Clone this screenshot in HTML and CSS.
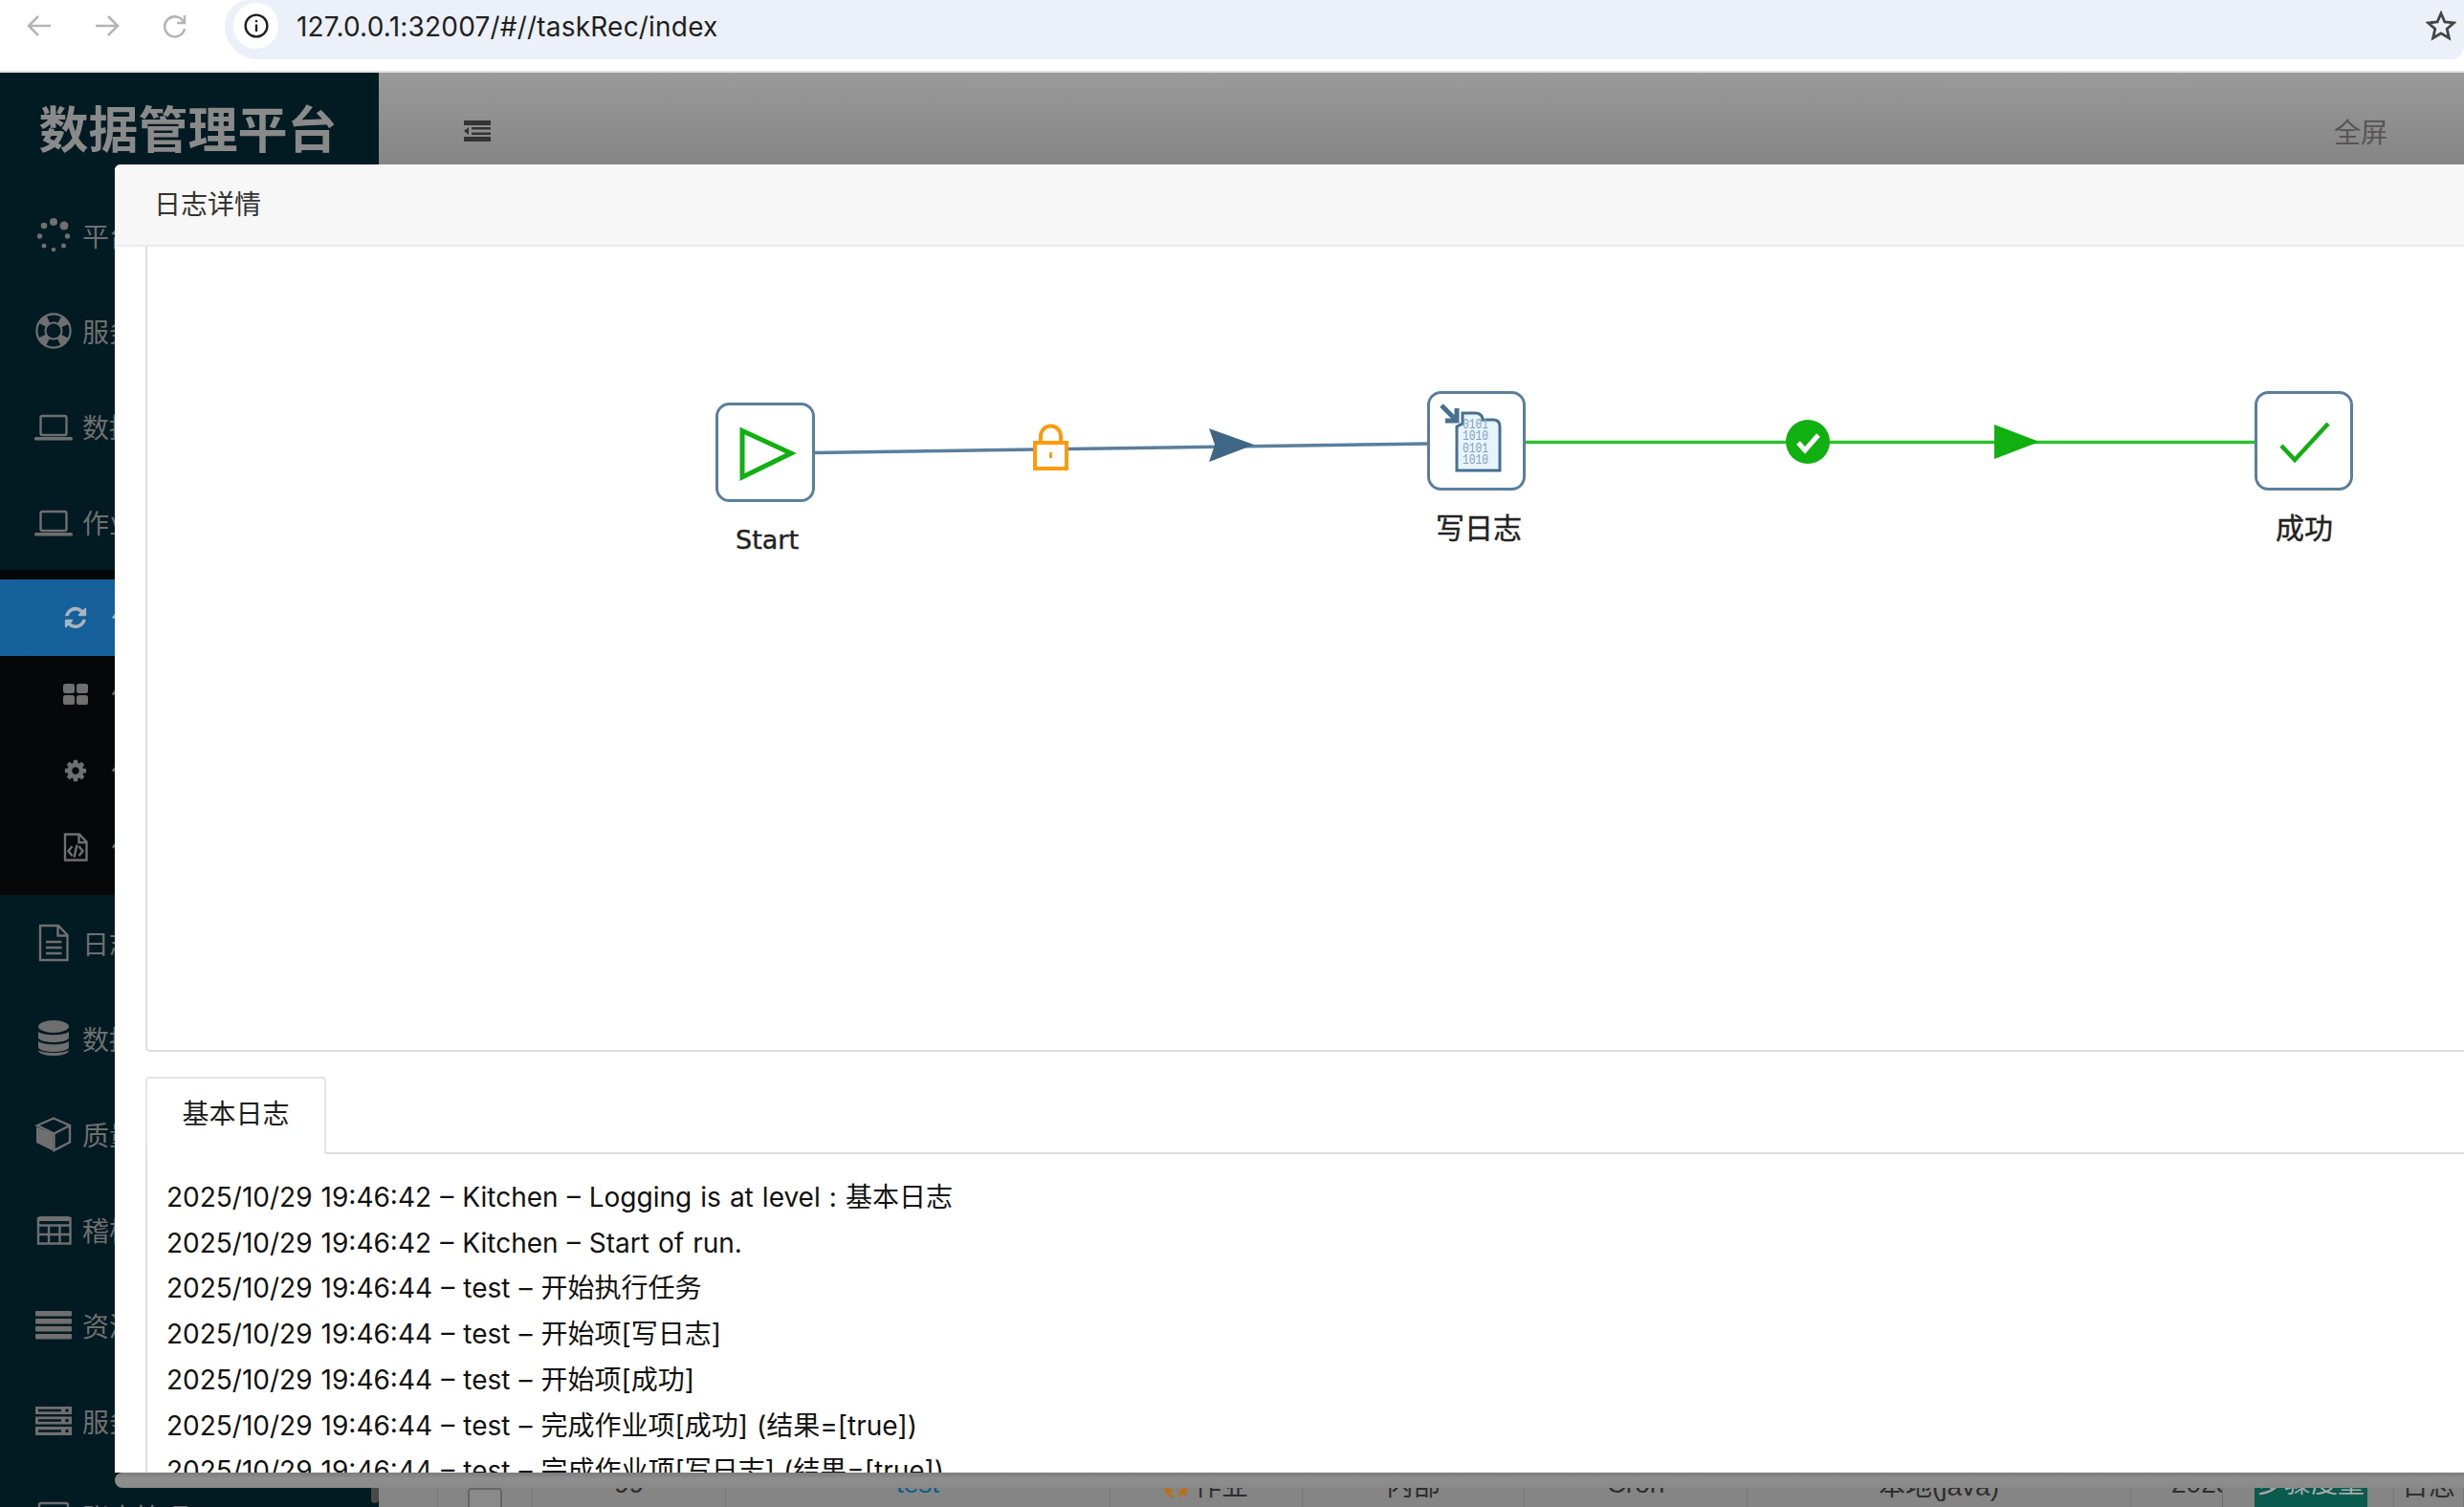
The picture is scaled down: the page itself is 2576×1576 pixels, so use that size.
FILE: index.html
```html
<!DOCTYPE html>
<html lang="zh">
<head>
    <meta charset="UTF-8">
    <title>数据管理平台</title>
    <link rel="stylesheet" href="styles.css">
</head>
<body>
    <div class="browser-bar">
        <svg class="nav-icon" viewBox="0 0 28 28"><path d="M26 14H3M13 4L3 14l10 10"/></svg>
        <svg class="nav-icon" viewBox="0 0 28 28"><path d="M2 14h23M15 4l10 10-10 10"/></svg>
        <svg class="nav-icon" viewBox="0 0 28 28"><path d="M23 10a10.500 10.500 0 1 0 1 7M24 3v8h-8"/></svg>
        <div class="url-bar">
            <div class="site-info">
                <svg viewBox="0 0 24 24"><circle cx="12" cy="12" r="10.500"/><path d="M12 10.500v7M12 6.500v2"/></svg>
            </div>
            <span class="url-text">127.0.0.1:32007/#//taskRec/index</span>
            <svg class="star" viewBox="0 0 32 32"><path d="M16 3l3.900 9 9.600.900-7.300 6.400 2.200 9.500L16 23.800l-8.400 5 2.200-9.500-7.300-6.400 9.600-.900z"/></svg>
        </div>
    </div>

    <div class="app">
        <aside class="sidebar">
            <div class="logo">数据管理平台</div>
            <ul class="menu">
                <li class="menu-item">
                    <svg class="menu-icon" viewBox="0 0 40 40"><circle cx="31" cy="10" r="4.500"/><circle cx="20" cy="6" r="4"/><circle cx="10" cy="10" r="3.300"/><circle cx="5.500" cy="21" r="2.700"/><circle cx="10" cy="31" r="2.500"/><circle cx="20" cy="35" r="2.300"/><circle cx="30.500" cy="31" r="2.500"/><circle cx="34.500" cy="21" r="2.700"/></svg>
                    <span>平台概览</span>
                </li>
                <li class="menu-item">
                    <svg class="menu-icon" viewBox="0 0 40 40"><circle cx="20" cy="20" r="18.700"/><circle class="cut" cx="20" cy="20" r="13" stroke-width="7" stroke-dasharray="12 8.420" stroke-dashoffset="6"/><circle class="hole" cx="20" cy="20" r="7.500"/></svg>
                    <span>服务管理</span>
                </li>
                <li class="menu-item">
                    <svg class="menu-icon" viewBox="0 0 40 40"><rect class="line" x="6.500" y="9" width="27" height="20" rx="2"/><rect y="31" width="40" height="3.500" rx="1.500"/></svg>
                    <span>数据管理</span>
                </li>
                <li class="menu-item">
                    <svg class="menu-icon" viewBox="0 0 40 40"><rect class="line" x="6.500" y="9" width="27" height="20" rx="2"/><rect y="31" width="40" height="3.500" rx="1.500"/></svg>
                    <span>作业管理</span>
                </li>
                <li class="submenu">
                    <ul>
                        <li class="sub-item active">
                            <svg class="sub-icon" viewBox="0 0 1792 1792"><path d="M1639 1056q0 5-1 7-64 268-268 434.500t-478 166.500q-146 0-282.500-55t-243.500-157l-129 129q-19 19-45 19t-45-19-19-45v-448q0-26 19-45t45-19h448q26 0 45 19t19 45-19 45l-137 137q71 66 161 102t187 36q134 0 250-65t186-179q11-17 53-117 8-23 30-23h192q13 0 22.500 9.500t9.500 22.500zm25-800v448q0 26-19 45t-45 19h-448q-26 0-45-19t-19-45 19-45l138-138q-148-137-349-137-134 0-250 65t-186 179q-11 17-53 117-8 23-30 23h-199q-13 0-22.500-9.500t-9.500-22.500v-7q65-268 270-434.500t480-166.500q146 0 284 55.500t245 156.500l130-129q19-19 45-19t45 19 19 45z"/></svg>
                            <span>作业记录</span>
                        </li>
                        <li class="sub-item">
                            <svg class="sub-icon" viewBox="0 0 26 26"><rect y="2" width="12" height="10" rx="2.500"/><rect x="14" y="2" width="12" height="10" rx="2.500"/><rect y="14" width="12" height="10" rx="2.500"/><rect x="14" y="14" width="12" height="10" rx="2.500"/></svg>
                            <span>作业分组</span>
                        </li>
                        <li class="sub-item">
                            <svg class="sub-icon" viewBox="0 0 1792 1792"><path d="M1152 896q0-106-75-181t-181-75-181 75-75 181 75 181 181 75 181-75 75-181zm512-109v222q0 12-8 23t-20 13l-185 28q-19 54-39 91 35 50 107 138 10 12 10 25t-9 23q-27 37-99 108t-94 71q-12 0-26-9l-138-108q-44 23-91 38-16 136-29 186-7 28-36 28h-222q-14 0-24.500-8.500t-11.500-21.500l-28-184q-49-16-90-37l-141 107q-10 9-25 9-14 0-25-11-126-114-165-168-7-10-7-23 0-12 8-23 15-21 51-66.500t54-70.500q-27-50-41-99l-183-27q-13-2-21-12.500t-8-23.500v-222q0-12 8-23t19-13l186-28q14-46 39-92-40-57-107-138-10-12-10-24 0-10 9-23 26-36 98.500-107.500t94.500-71.500q13 0 26 10l138 107q44-23 91-38 16-136 29-186 7-28 36-28h222q14 0 24.500 8.500t11.500 21.500l28 184q49 16 90 37l142-107q9-9 24-9 13 0 25 10 129 119 165 170 7 8 7 22 0 12-8 23-15 21-51 66.500t-54 70.500q26 50 41 98l183 28q13 2 21 12.500t8 23.500z"/></svg>
                            <span>作业配置</span>
                        </li>
                        <li class="sub-item">
                            <svg class="sub-icon sub-icon-tall" viewBox="0 0 26 30"><path class="line" d="M2 1.500h15l7.500 8V28.500H2zM16.500 1.500v8.500h8M9.500 14l-4 5 4 5M16.500 14l4 5-4 5M14.500 12.500l-3 13"/></svg>
                            <span>作业脚本</span>
                        </li>
                    </ul>
                </li>
                <li class="menu-item">
                    <svg class="menu-icon" viewBox="0 0 40 40"><path class="line" d="M6 2h19l9.500 10v26H6zM24.500 2v10.500h10M12 19h16.500M12 25h16.500M12 31h16.500"/></svg>
                    <span>日志管理</span>
                </li>
                <li class="menu-item">
                    <svg class="menu-icon" viewBox="0 0 40 40"><ellipse cx="20" cy="7.500" rx="16" ry="6.500"/><path d="M4 12.500c3 5 29 5 32 0v7c-3 6-29 6-32 0zM4 22.500c3 5 29 5 32 0v7c-3 6-29 6-32 0zM4 32c3 4 29 4 32 0c0 8-32 8-32 0z"/></svg>
                    <span>数据源</span>
                </li>
                <li class="menu-item">
                    <svg class="menu-icon" viewBox="0 0 40 40"><path d="M19.500 19.500L2 12.500v16.500l17.500 8.500z"/><path class="line" d="M3 11l17-7.500L37 11v17.500L20.500 37V19.500zM3 11l17.500 8.500M37 11l-16.500 8.500"/></svg>
                    <span>质量管理</span>
                </li>
                <li class="menu-item">
                    <svg class="menu-icon" viewBox="0 0 40 40"><path class="line" d="M4 8h33.500v26.500H4zM4 15.500h33.500M4 25h33.500M15 15.500V34M26.500 15.500V34"/><path d="M5 6h31.500v5H5z"/></svg>
                    <span>稽核管理</span>
                </li>
                <li class="menu-item">
                    <svg class="menu-icon" viewBox="0 0 40 40"><rect x="1" y="5" width="38" height="5.500" rx="1"/><rect x="1" y="13" width="38" height="5.500" rx="1"/><rect x="1" y="21" width="38" height="5.500" rx="1"/><rect x="1" y="29" width="38" height="5.500" rx="1"/></svg>
                    <span>资源管理</span>
                </li>
                <li class="menu-item">
                    <svg class="menu-icon" viewBox="0 0 40 40"><path d="M1 5h38v8H1zM1 15.500h38v8H1zM1 26h38v9H1z"/><path class="slot" d="M4 9h24M4 19.500h24M4 30.500h24"/><circle class="hole" cx="34" cy="9" r="1.800"/><circle class="hole" cx="34" cy="19.500" r="1.800"/><circle class="hole" cx="34" cy="30.500" r="1.800"/></svg>
                    <span>服务器管理</span>
                </li>
                <li class="menu-item">
                    <svg class="menu-icon" viewBox="0 0 40 40"><rect class="line" x="5" y="6" width="30" height="26" rx="2"/></svg>
                    <span>账户管理</span>
                </li>
            </ul>
            <div class="side-thumb"></div>
        </aside>

        <main class="main">
            <header class="topbar">
                <svg class="collapse" viewBox="0 0 28 22"><path d="M0 0h28v5H0zM0 17h28v5H0zM8 7h20v2.500H8zM8 12.500h20V15H8zM5 7v8l-5-4z"/></svg>
                <span class="fullscreen">全屏</span>
            </header>
            <div class="content">
                <div class="table-row">
                    <div class="cell w62"></div>
                    <div class="cell w99"><span class="checkbox"></span></div>
                    <div class="cell w202">99</div>
                    <div class="cell w402 link">test</div>
                    <div class="cell w201">
                        <svg class="type-icon" viewBox="0 0 26 14"><path d="M1 1l9 5-3 1.500 3 6-3 .5-3-5.500L1 10zM25 1l-3 12-3-4-3 4-2-1 3-5-3-1z"/></svg>作业
                    </div>
                    <div class="cell w232">内部</div>
                    <div class="cell w233">Cron</div>
                    <div class="cell w401">本地(java)</div>
                    <div class="cell w96 clip">2025/10/29 19:46:42</div>
                    <div class="cell w179"><span class="metric-btn">步骤度量</span></div>
                    <div class="cell w73">日志</div>
                </div>
            </div>
        </main>

        <section class="modal">
            <div class="modal-head">日志详情</div>
            <div class="modal-body">
                <div class="flow-panel">
                    <!-- viewBox uses page coordinates so the nodes read the same as the reference -->
                    <svg class="flow" viewBox="154 258 2422 838">
                        <path class="hop" d="M851 473.500L1493 464"/>
                        <path class="hop-ok" d="M1594 462.500H2358"/>

                        <g class="lock">
                            <path d="M1088 463v-7a10 10 0 0 1 21 0v7"/>
                            <rect x="1082" y="463" width="33" height="27"/>
                            <rect class="lock-dot" x="1097" y="473" width="3" height="6"/>
                        </g>
                        <path class="arrow" d="M1264 448l47 17-47 18 6-18z"/>
                        <circle class="ok-dot" cx="1890" cy="462" r="23"/>
                        <path class="ok-tick" d="M1880 463l7 8 14-16"/>
                        <path class="arrow-ok" d="M2085 444l47 18-47 18z"/>

                        <rect class="node" x="749.500" y="422.500" width="101" height="101" rx="13"/>
                        <path class="start-tri" d="M776 450.500L827 474l-51 25z"/>
                        <text class="node-label label-en" x="802" y="574">Start</text>

                        <rect class="node" x="1493.500" y="410.500" width="100" height="101" rx="13"/>
                        <path class="log-arrow" d="M1507 424l15 15M1511 440h12v-13"/>
                        <path class="log-doc" d="M1523 446l6-3v-11h13c6 0 8 3 8 7h11c5 0 7 3 7 7v46h-45z"/>
                        <text class="log-bits" x="1529" y="448" textLength="27" lengthAdjust="spacingAndGlyphs">0101</text>
                        <text class="log-bits" x="1529" y="460" textLength="27" lengthAdjust="spacingAndGlyphs">1010</text>
                        <text class="log-bits" x="1529" y="473" textLength="27" lengthAdjust="spacingAndGlyphs">0101</text>
                        <text class="log-bits" x="1529" y="485" textLength="27" lengthAdjust="spacingAndGlyphs">1010</text>
                        <text class="node-label" x="1546" y="563">写日志</text>

                        <rect class="node" x="2358.500" y="410.500" width="100" height="101" rx="13"/>
                        <path class="tick" d="M2385 466l14 15 35-38"/>
                        <text class="node-label" x="2409" y="563">成功</text>
                    </svg>
                </div>
                <div class="tabs">
                    <div class="tab">基本日志</div>
                </div>
                <div class="log-pane">
                    <p>2025/10/29 19:46:42 – Kitchen – Logging is at level : 基本日志</p>
                    <p>2025/10/29 19:46:42 – Kitchen – Start of run.</p>
                    <p>2025/10/29 19:46:44 – test – 开始执行任务</p>
                    <p>2025/10/29 19:46:44 – test – 开始项[写日志]</p>
                    <p>2025/10/29 19:46:44 – test – 开始项[成功]</p>
                    <p>2025/10/29 19:46:44 – test – 完成作业项[成功] (结果=[true])</p>
                    <p>2025/10/29 19:46:44 – test – 完成作业项[写日志] (结果=[true])</p>
                </div>
            </div>
        </section>
        <div class="scroll-band"></div>
    </div>
</body>
</html>
```

FILE: styles.css
```css
html, body {
    margin: 0;
    height: 100%;
}
body {
    width: 2576px;
    height: 1576px;
    overflow: hidden;
    display: flex;
    flex-direction: column;
    font-family: "Liberation Sans", "Noto Sans CJK SC", sans-serif;
    font-size: 28px;
    background: #ffffff;
}
ul {
    list-style: none;
    margin: 0;
    padding: 0;
}

/* browser chrome */
.browser-bar {
    height: 76px;
    flex: none;
    display: flex;
    align-items: flex-start;
    padding-left: 27px;
    box-sizing: border-box;
    background: #ffffff;
    border-bottom: 2px solid #e2e2e2;
}
.nav-icon {
    width: 28px;
    height: 28px;
    margin: 13px 43px 0 0;
    fill: none;
    stroke: #b4b4b4;
    stroke-width: 2.500;
}
.url-bar {
    flex: 1;
    height: 62px;
    margin-left: -5px;
    display: flex;
    align-items: center;
    background: #ebf0f9;
    border-radius: 26px 0 14px 34px;
    padding-left: 9px;
}
.site-info {
    width: 47px;
    height: 48px;
    margin-top: -8px;
    display: flex;
    align-items: center;
    justify-content: center;
    background: #ffffff;
    border-radius: 24px;
}
.site-info svg {
    width: 26px;
    height: 26px;
    fill: none;
    stroke: #1f1f1f;
    stroke-width: 2.200;
}
.url-text {
    margin: -6px 0 0 19px;
    color: #1f1f1f;
    font-family: "Inter", "Liberation Sans", sans-serif;
    font-size: 28px;
    letter-spacing: 0.2px;
}
.star {
    width: 32px;
    height: 32px;
    margin: -8px 8px 0 auto;
    fill: none;
    stroke: #444444;
    stroke-width: 2.800;
}

.app {
    position: relative;
    flex: 1;
    display: flex;
    min-height: 0;
}

/* sidebar, dimmed by the modal backdrop */
.sidebar {
    position: relative;
    width: 396px;
    flex: none;
    background: #021a22;
    color: #6f6f6f;
}
.logo {
    height: 96px;
    line-height: 122px;
    padding-right: 3px;
    text-align: center;
    font-size: 52px;
    font-weight: bold;
    color: #8a8a8a;
    white-space: nowrap;
}
.menu {
    padding-top: 24px;
}
.menu-item {
    height: 100px;
    display: flex;
    align-items: center;
    padding-left: 36px;
}
.menu-icon {
    width: 40px;
    height: 40px;
    margin-right: 10px;
    flex: none;
    fill: #6f6f6f;
}
.menu-icon .line, .sub-icon .line {
    fill: none;
    stroke: #6f6f6f;
    stroke-width: 2.400;
}
.menu-icon .cut {
    fill: none;
    stroke: #021a22;
}
.menu-icon .hole {
    fill: #021a22;
}
.menu-icon .slot {
    fill: none;
    stroke: #021a22;
    stroke-width: 2.500;
}
.submenu {
    background: #060709;
    padding: 10px 0;
}
.sub-item {
    height: 80px;
    display: flex;
    align-items: center;
    padding-left: 66px;
}
.sub-item.active {
    background: linear-gradient(90deg, #15619b, #145e98);
    color: #a8b4be;
}
.sub-icon {
    width: 26px;
    height: 26px;
    margin-right: 24px;
    flex: none;
    fill: #6f6f6f;
}
.sub-icon-tall {
    height: 30px;
}
.sub-item.active .sub-icon {
    fill: #a8b4be;
}
.side-thumb {
    position: absolute;
    right: 0;
    bottom: 4px;
    width: 8px;
    height: 60px;
    border-radius: 0 0 4px 4px;
    background: #4a4a4a;
}

/* page behind the modal */
.main {
    flex: 1;
    min-width: 0;
    display: flex;
    flex-direction: column;
    background: #858585;
}
.topbar {
    height: 96px;
    flex: none;
    display: flex;
    align-items: center;
    padding: 26px 80px 0 89px;
    box-sizing: border-box;
    background: linear-gradient(180deg, #9a9a9a, #858585);
}
.collapse {
    width: 28px;
    height: 22px;
    fill: #333333;
}
.fullscreen {
    margin-left: auto;
    color: #555555;
}
.content {
    flex: 1;
    padding-top: 1336px;
    color: #2e2e2e;
}
.table-row {
    height: 88px;
    display: flex;
}
.cell {
    box-sizing: border-box;
    height: 88px;
    display: flex;
    align-items: center;
    justify-content: center;
    white-space: nowrap;
    overflow: hidden;
    border-right: 1px solid #777777;
}
.w62 { width: 62px; }
.w99 { width: 99px; }
.w202 { width: 202px; }
.w402 { width: 402px; }
.w201 { width: 201px; }
.w232 { width: 232px; }
.w233 { width: 233px; }
.w401 { width: 401px; }
.w96 { width: 96px; }
.w179 { width: 179px; }
.w73 { width: 73px; }
.link {
    color: #0e5f86;
}
.clip {
    justify-content: flex-start;
    padding-left: 42px;
    border-right: 1px solid #6f6f6f;
}
.checkbox {
    width: 36px;
    height: 36px;
    margin-top: 44px;
    box-sizing: border-box;
    border: 2px solid #666666;
    border-radius: 4px;
    background: #8a8a8a;
}
.type-icon {
    width: 26px;
    height: 14px;
    margin: 16px 6px 0 0;
    fill: #b5721a;
}
.metric-btn {
    margin-left: 6px;
    padding: 0 3px;
    height: 88px;
    line-height: 88px;
    background: #0a5a4d;
    color: #a9a9a9;
    white-space: nowrap;
}

/* log detail modal */
.modal {
    position: absolute;
    left: 120px;
    right: 0;
    top: 96px;
    bottom: 36px;
    overflow: hidden;
    display: flex;
    flex-direction: column;
    border-radius: 6px 0 0 0;
    background: #ffffff;
}
.modal-head {
    height: 86px;
    flex: none;
    box-sizing: border-box;
    padding: 26px 0 0 41px;
    line-height: 34px;
    color: #333333;
    background: #f7f7f7;
    border-bottom: 2px solid #ececec;
}
.modal-body {
    flex: 1;
    min-height: 0;
    padding-left: 32px;
}
.flow-panel {
    height: 842px;
    box-sizing: border-box;
    border-left: 2px solid #dddddd;
    border-bottom: 2px solid #dddddd;
    border-radius: 0 0 0 5px;
}
.flow {
    display: block;
    width: 2422px;
    height: 838px;
}
.hop {
    fill: none;
    stroke: #5a7f9c;
    stroke-width: 3.500;
}
.hop-ok {
    fill: none;
    stroke: #2fbf2f;
    stroke-width: 3.500;
}
.node {
    fill: #ffffff;
    stroke: #5a7f9c;
    stroke-width: 3;
}
.start-tri {
    fill: none;
    stroke: #10b010;
    stroke-width: 5;
}
.tick {
    fill: none;
    stroke: #10b010;
    stroke-width: 4.500;
}
.lock path, .lock rect {
    fill: #ffffff;
    stroke: #ff9a0a;
    stroke-width: 4;
}
.lock path {
    fill: none;
}
.lock .lock-dot {
    fill: #ff9a0a;
    stroke: none;
}
.arrow {
    fill: #3f6684;
}
.arrow-ok {
    fill: #10b010;
}
.ok-dot {
    fill: #10b010;
}
.ok-tick {
    fill: none;
    stroke: #ffffff;
    stroke-width: 5;
}
.log-arrow {
    fill: none;
    stroke: #47708f;
    stroke-width: 5;
}
.log-doc {
    fill: #e8f4fc;
    stroke: #47708f;
    stroke-width: 3;
}
.log-bits {
    font-family: "Liberation Mono", monospace;
    font-size: 15px;
    fill: #7fa3bd;
}
.node-label {
    font-size: 30px;
    text-anchor: middle;
    fill: #222222;
    stroke: #222222;
    stroke-width: 0.400;
}
.label-en {
    font-family: "DejaVu Sans", sans-serif;
    font-size: 27px;
}
.tabs {
    margin-top: 26px;
    height: 81px;
    box-sizing: border-box;
    border-bottom: 2px solid #dddddd;
}
.tab {
    width: 189px;
    height: 81px;
    box-sizing: border-box;
    padding-top: 21px;
    line-height: 34px;
    text-align: center;
    color: #1a1a1a;
    background: #ffffff;
    border: 2px solid #e4e4e4;
    border-bottom: none;
    border-radius: 4px 4px 0 0;
}
.log-pane {
    height: 400px;
    padding: 22px 0 0 20px;
    border-left: 2px solid #dddddd;
    color: #111111;
    font-family: "Inter", "Noto Sans CJK SC", sans-serif;
    word-spacing: 1.200px;
}
.log-pane p {
    margin: 0;
    line-height: 47.700px;
    white-space: nowrap;
}
.scroll-band {
    position: absolute;
    left: 120px;
    right: 0;
    bottom: 20px;
    height: 16px;
    border-radius: 8px 0 0 8px;
    background: linear-gradient(180deg, #7c7c7c, #8e8e8e 40%, #8a8a8a);
}
```
